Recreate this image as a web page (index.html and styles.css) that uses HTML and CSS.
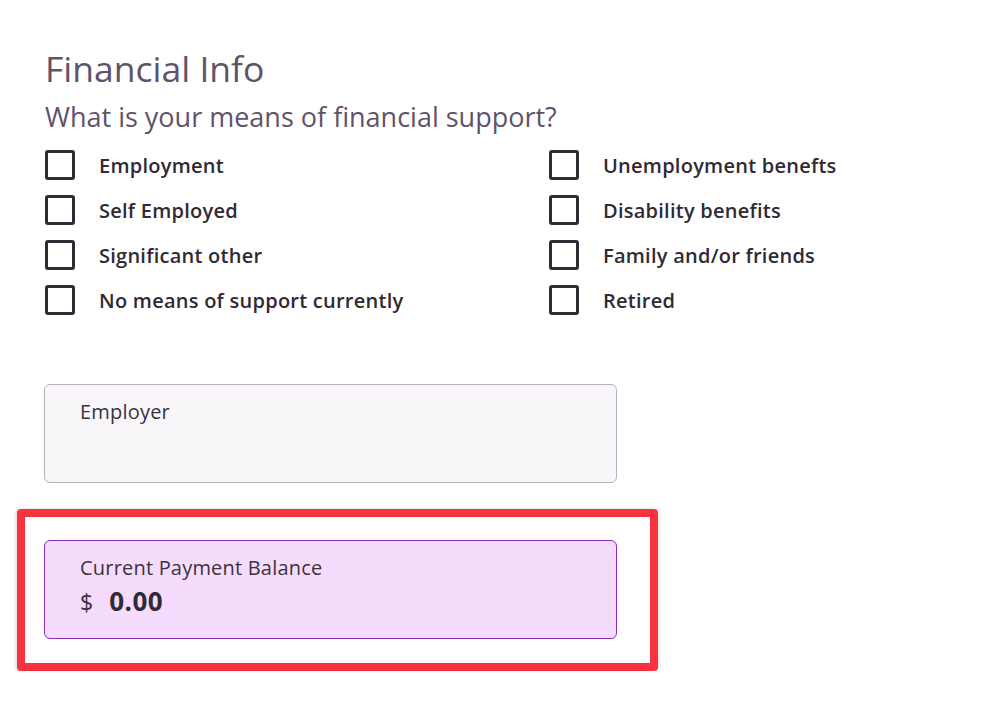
FILE: index.html
```html
<!DOCTYPE html>
<html>
<head>
<meta charset="utf-8">
<link rel="stylesheet" href="styles.css">
</head>
<body>
<main class="page">
  <h1 class="title">Financial Info</h1>
  <h2 class="question">What is your means of financial support?</h2>
  <div class="options">
    <div class="col">
      <label class="option"><span class="box"></span><span class="opt-label">Employment</span></label>
      <label class="option"><span class="box"></span><span class="opt-label">Self Employed</span></label>
      <label class="option"><span class="box"></span><span class="opt-label">Significant other</span></label>
      <label class="option"><span class="box"></span><span class="opt-label">No means of support currently</span></label>
    </div>
    <div class="col">
      <label class="option"><span class="box"></span><span class="opt-label">Unemployment benefts</span></label>
      <label class="option"><span class="box"></span><span class="opt-label">Disability benefits</span></label>
      <label class="option"><span class="box"></span><span class="opt-label">Family and/or friends</span></label>
      <label class="option"><span class="box"></span><span class="opt-label">Retired</span></label>
    </div>
  </div>
  <div class="field employer">
    <div class="field-label">Employer</div>
  </div>
  <div class="highlight">
    <div class="field balance">
      <div class="field-label">Current Payment Balance</div>
      <div class="amount"><span class="currency">$</span><span class="value">0.00</span></div>
    </div>
  </div>
</main>
</body>
</html>
```
FILE: styles.css
```css
html, body {
  margin: 0;
  padding: 0;
  background: #ffffff;
}
body {
  font-family: "Open Sans", "Lato", "Noto Sans", sans-serif;
  color: #2f2a34;
}
.page {
  padding: 48px 0 0 45px;
  display: flex;
  flex-direction: column;
  align-items: flex-start;
}
.title {
  margin: 0;
  font-size: 35.5px;
  font-weight: 400;
  line-height: 40px;
  color: #5f5369;
}
.question {
  margin: 14px 0 0 0;
  font-size: 27px;
  font-weight: 400;
  line-height: 30px;
  color: #5f5369;
}
.options {
  display: grid;
  grid-template-columns: 504px auto;
  margin-top: 18px;
}
.col {
  display: flex;
  flex-direction: column;
  gap: 15px;
}
.option {
  display: flex;
  align-items: center;
  gap: 24px;
  height: 30px;
}
.box {
  box-sizing: border-box;
  width: 30px;
  height: 30px;
  border: 3px solid #2f2a34;
  border-radius: 3px;
}
.opt-label {
  font-size: 20px;
  font-weight: 600;
  letter-spacing: 0.25px;
  color: #2f2a34;
}
.field {
  box-sizing: border-box;
  width: 573px;
  height: 99px;
  border-radius: 6px;
  padding: 14px 35px 0 35px;
}
.field-label {
  font-size: 20px;
  letter-spacing: 0.2px;
  line-height: 26px;
  color: #3a333f;
}
.employer {
  margin: 69px 0 0 -1px;
  background: #f8f6f9;
  border: 1px solid #b9b1bf;
}
.highlight {
  margin: 26px 0 0 -28px;
  box-sizing: border-box;
  width: 641px;
  height: 162px;
  border: 8px solid #f8323f;
  border-radius: 4px;
  padding: 23px 0 0 19px;
  box-shadow: 0 1px 4px rgba(0, 0, 0, 0.25);
}
.balance {
  background: #f5dcfc;
  border: 1px solid #8b2db6;
}
.amount {
  display: flex;
  align-items: baseline;
  gap: 16px;
  margin-top: 2px;
}
.currency {
  font-size: 23px;
  color: #3a333f;
}
.value {
  font-size: 26px;
  font-weight: 700;
  letter-spacing: 0.5px;
  color: #2f2a34;
}
```
